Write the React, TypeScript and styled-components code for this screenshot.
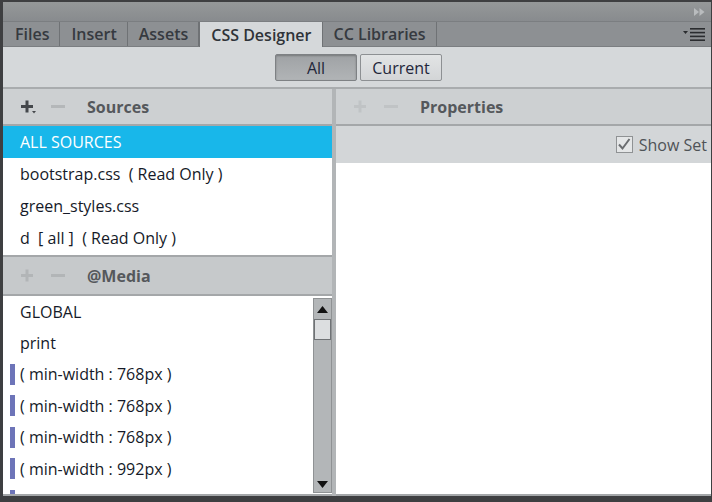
import React from 'react'
import styled, { createGlobalStyle } from 'styled-components'

const GlobalStyle = createGlobalStyle`
  html, body {
    margin: 0;
    padding: 0;
    background: #ffffff;
  }
  * {
    box-sizing: border-box;
  }
`

const Window = styled.div`
  width: 712px;
  height: 502px;
  display: flex;
  flex-direction: column;
  border-top: 2px solid #3e3f41;
  border-left: 3px solid #3e3f41;
  border-right: 1px solid #3e3f41;
  border-bottom: 6px solid #3e3f41;
  background: #d4d7d9;
  font-family: 'Open Sans', 'Liberation Sans', sans-serif;
  overflow: hidden;
`

const TopBar = styled.div`
  height: 20px;
  flex: none;
  display: flex;
  align-items: center;
  justify-content: flex-end;
  padding-right: 6px;
  background: linear-gradient(#959899, #888b8e);
  border-bottom: 1px solid #7b7e81;
`

const TabRow = styled.div`
  height: 25px;
  flex: none;
  display: flex;
  align-items: flex-end;
  background: #8d9093;
  padding-left: 1px;
  border-bottom: 1px solid #7b7e81;
`

const Tab = styled.div<{ $active?: boolean }>`
  height: ${(p) => (p.$active ? '25px' : '24px')};
  padding: 0 10px 0 11px;
  display: flex;
  align-items: center;
  font-size: 16px;
  font-weight: 600;
  color: ${(p) => (p.$active ? '#2f3338' : '#363a40')};
  background: ${(p) => (p.$active ? '#d5d8da' : 'transparent')};
  border-right: 1px solid #6f7275;
  border-left: ${(p) => (p.$active ? '1px solid #6f7275' : 'none')};
  margin-bottom: ${(p) => (p.$active ? '-1px' : '0')};
`

const TabSpacer = styled.div`
  flex: 1;
  height: 23px;
  display: flex;
  align-items: center;
  justify-content: flex-end;
  padding-right: 5px;
`

const Toolbar = styled.div`
  height: 42px;
  flex: none;
  display: flex;
  align-items: center;
  justify-content: center;
  gap: 3px;
  padding-left: 3px;
  padding-top: 1px;
  background: #d5d8da;
  border-bottom: 2px solid #a9acae;
`

const ToggleButton = styled.button<{ $pressed?: boolean }>`
  width: 82px;
  height: 27px;
  padding: 0;
  font-family: 'Open Sans', 'Liberation Sans', sans-serif;
  font-size: 16px;
  font-weight: 500;
  color: #23263a;
  border: 1px solid ${(p) => (p.$pressed ? '#7e8184' : '#8d9093')};
  border-radius: 2px;
  background: ${(p) =>
    p.$pressed ? 'linear-gradient(#9fa2a5, #b1b4b6)' : 'linear-gradient(#e2e4e5, #d3d5d7)'};
  box-shadow: ${(p) => (p.$pressed ? 'inset 0 1px 2px rgba(0,0,0,0.25)' : 'none')};
`

const Body = styled.div`
  flex: 1;
  display: grid;
  grid-template-columns: 333px 1fr;
  min-height: 0;
`

const Column = styled.div<{ $left?: boolean }>`
  display: flex;
  flex-direction: column;
  min-height: 0;
  border-right: ${(p) => (p.$left ? '4px solid #b2b5b7' : 'none')};
`

const SectionHeader = styled.div<{ $dark?: boolean }>`
  height: ${(p) => (p.$dark ? '41px' : '37px')};
  flex: none;
  display: flex;
  align-items: center;
  gap: 13px;
  padding-left: ${(p) => (p.$dark ? '17px' : '17px')};
  background: ${(p) => (p.$dark ? '#c6c9cb' : '#cdd0d2')};
  border-bottom: 2px solid #a4a7a9;
  border-top: ${(p) => (p.$dark ? '2px solid #a4a7a9' : 'none')};
`

const HeaderTitle = styled.span`
  margin-left: 8px;
  font-size: 16px;
  font-weight: 700;
  color: #55585c;
`

const IconSvg = styled.svg`
  display: block;
  flex: none;
`

const SourceList = styled.div`
  flex: none;
  background: #ffffff;
  display: flex;
  flex-direction: column;
  padding-bottom: 1px;
`

const Row = styled.div<{ $selected?: boolean }>`
  height: 32px;
  flex: none;
  display: flex;
  align-items: center;
  padding-left: 17px;
  font-size: 16px;
  color: ${(p) => (p.$selected ? '#ffffff' : '#151a28')};
  background: ${(p) => (p.$selected ? '#18b7ea' : 'transparent')};
  white-space: pre;
`

const MediaArea = styled.div`
  flex: 1;
  min-height: 0;
  display: flex;
  background: #ffffff;
  border-bottom: 2px solid #a4a7a9;
  overflow: hidden;
`

const MediaList = styled.div`
  flex: 1;
  display: flex;
  flex-direction: column;
  overflow: hidden;
`

const MediaRow = styled(Row)<{ $marked?: boolean }>`
  height: 31.4px;
  padding-left: ${(p) => (p.$marked ? '7px' : '17px')};
  gap: 5px;
`

const Marker = styled.span`
  width: 5px;
  height: 21px;
  background: #6d74b8;
  flex: none;
`

const Scrollbar = styled.div`
  width: 19px;
  flex: none;
  margin: 2px 0 1px;
  display: flex;
  flex-direction: column;
  background: #b3b6b8;
  border: 1px solid #8f9294;
`

const ScrollButton = styled.div<{ $down?: boolean }>`
  height: ${(p) => (p.$down ? '16px' : '20px')};
  flex: none;
  display: flex;
  align-items: center;
  justify-content: center;
  margin-top: ${(p) => (p.$down ? 'auto' : '0')};
`

const Thumb = styled.div`
  height: 21px;
  background: #dcdee0;
  border: 1px solid #6f7275;
`

const ShowSetRow = styled.div`
  height: 37px;
  flex: none;
  display: flex;
  align-items: center;
  justify-content: flex-end;
  gap: 6px;
  padding-right: 4px;
  background: #d3d6d8;
  font-size: 16px;
  color: #4f5357;
`

const Checkbox = styled.span`
  width: 17px;
  height: 17px;
  border: 1px solid #8f9294;
  background: #e4e6e7;
  display: flex;
  align-items: center;
  justify-content: center;
`

const PropertiesArea = styled.div`
  flex: 1;
  background: #ffffff;
  border-bottom: 2px solid #a4a7a9;
`

const Plus = ({ color, dot }: { color: string; dot?: boolean }) => (
  <IconSvg width="17" height="16" viewBox="0 0 17 16">
    <rect x="1" y="6" width="12" height="3" fill={color} />
    <rect x="5.5" y="1.5" width="3" height="12" fill={color} />
    {dot && <path d="M12 12 h4 l-2 2.5 z" fill={color} />}
  </IconSvg>
)

const Minus = ({ color }: { color: string }) => (
  <IconSvg width="16" height="16" viewBox="0 0 16 16">
    <rect x="1" y="6" width="14" height="3" fill={color} />
  </IconSvg>
)

const sources = ['bootstrap.css  ( Read Only )', 'green_styles.css', 'd  [ all ]  ( Read Only )']
const media = [
  { label: 'GLOBAL', marked: false },
  { label: 'print', marked: false },
  { label: '( min-width : 768px )', marked: true },
  { label: '( min-width : 768px )', marked: true },
  { label: '( min-width : 768px )', marked: true },
  { label: '( min-width : 992px )', marked: true },
  { label: '( min-width : 1200px )', marked: true },
]

export default function App() {
  return (
    <>
      <GlobalStyle />
      <Window>
        <TopBar>
          <IconSvg width="11" height="8" viewBox="0 0 11 8">
            <path d="M0 0 L5 4 L0 8 Z M5.5 0 L10.5 4 L5.5 8 Z" fill="#b9bcbe" />
          </IconSvg>
        </TopBar>
        <TabRow>
          <Tab>Files</Tab>
          <Tab>Insert</Tab>
          <Tab>Assets</Tab>
          <Tab $active>CSS Designer</Tab>
          <Tab>CC Libraries</Tab>
          <TabSpacer>
            <IconSvg width="23" height="13" viewBox="0 0 23 13">
              <path d="M0 3 h5 l-2.5 3 z" fill="#2a2c2f" />
              <rect x="7" y="0" width="15" height="1.6" fill="#2a2c2f" />
              <rect x="7" y="3.8" width="15" height="1.6" fill="#2a2c2f" />
              <rect x="7" y="7.6" width="15" height="1.6" fill="#2a2c2f" />
              <rect x="7" y="11.4" width="15" height="1.6" fill="#2a2c2f" />
            </IconSvg>
          </TabSpacer>
        </TabRow>
        <Toolbar>
          <ToggleButton $pressed>All</ToggleButton>
          <ToggleButton>Current</ToggleButton>
        </Toolbar>
        <Body>
          <Column $left>
            <SectionHeader>
              <Plus color="#45484c" dot />
              <Minus color="#b4b7b9" />
              <HeaderTitle>Sources</HeaderTitle>
            </SectionHeader>
            <SourceList>
              <Row $selected>ALL SOURCES</Row>
              {sources.map((s) => (
                <Row key={s}>{s}</Row>
              ))}
            </SourceList>
            <SectionHeader $dark>
              <Plus color="#b2b5b7" />
              <Minus color="#b2b5b7" />
              <HeaderTitle>@Media</HeaderTitle>
            </SectionHeader>
            <MediaArea>
              <MediaList>
                {media.map((m, i) => (
                  <MediaRow key={i} $marked={m.marked}>
                    {m.marked && <Marker />}
                    {m.label}
                  </MediaRow>
                ))}
              </MediaList>
              <Scrollbar>
                <ScrollButton>
                  <IconSvg width="11" height="7" viewBox="0 0 11 7">
                    <path d="M0 7 L5.5 0 L11 7 Z" fill="#111" />
                  </IconSvg>
                </ScrollButton>
                <Thumb />
                <ScrollButton $down>
                  <IconSvg width="11" height="7" viewBox="0 0 11 7">
                    <path d="M0 0 L5.5 7 L11 0 Z" fill="#111" />
                  </IconSvg>
                </ScrollButton>
              </Scrollbar>
            </MediaArea>
          </Column>
          <Column>
            <SectionHeader>
              <Plus color="#c0c3c5" />
              <Minus color="#c0c3c5" />
              <HeaderTitle>Properties</HeaderTitle>
            </SectionHeader>
            <ShowSetRow>
              <Checkbox>
                <IconSvg width="14" height="13" viewBox="0 0 14 13">
                  <path d="M2 6.5 L5.5 10.5 L12.5 1" stroke="#6a6d70" strokeWidth="2" fill="none" />
                </IconSvg>
              </Checkbox>
              Show Set
            </ShowSetRow>
            <PropertiesArea />
          </Column>
        </Body>
      </Window>
    </>
  )
}
